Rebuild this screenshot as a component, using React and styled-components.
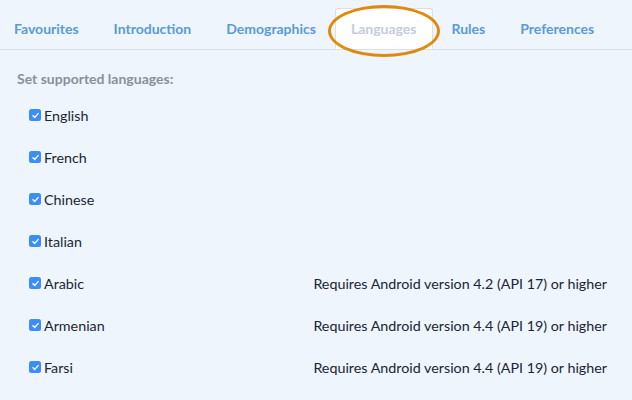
import { createGlobalStyle } from "styled-components";
import styled from "styled-components";

const GlobalStyle = createGlobalStyle`
  html, body {
    margin: 0;
    padding: 0;
    background: #eef5fd;
    font-family: Lato, "Open Sans", sans-serif;
  }
`;

const Page = styled.div`
  width: 632px;
  height: 400px;
  overflow: hidden;
  background: #eef5fd;
`;

const TabBar = styled.ul`
  display: flex;
  margin: 0;
  padding: 8px 0 0 0;
  list-style: none;
  border-bottom: 1px solid #dcdfe3;
  height: 41px;
  margin-left: -2px;
`;

const Tab = styled.li`
  position: relative;
  display: flex;
  align-items: center;
  height: 41px;
  padding: 0 15px;
  margin-right: 3px;
  margin-bottom: -1px;
  box-sizing: border-box;
  font-size: 14px;
  font-weight: 700;
  color: ${(props) => (props.active ? "#c5cdd8" : "#5a9ad8")};
  background: ${(props) => (props.active ? "#ffffff" : "transparent")};
  border: 1px solid ${(props) => (props.active ? "#dcdfe3" : "transparent")};
  border-bottom-color: ${(props) => (props.active ? "#ffffff" : "transparent")};
  border-radius: 3px 3px 0 0;
  cursor: pointer;
`;

const Highlight = styled.span`
  position: absolute;
  left: -8px;
  top: -4px;
  width: 106px;
  height: 46px;
  border: 3px solid #e08a0c;
  border-radius: 50%;
  pointer-events: none;
`;

const Content = styled.div`
  padding: 20px 25px 0 17px;
`;

const Heading = styled.div`
  font-size: 14px;
  font-weight: 700;
  color: #8a909b;
  margin-bottom: 7px;
`;

const Row = styled.div`
  display: flex;
  align-items: center;
  justify-content: space-between;
  height: 42px;
  padding-left: 12px;
  font-size: 14.3px;
  color: #1b2535;
`;

const Label = styled.label`
  display: flex;
  align-items: center;
  gap: 3px;
`;

const Box = styled.span`
  display: inline-flex;
  align-items: center;
  justify-content: center;
  width: 12px;
  height: 12px;
  border-radius: 2.5px;
  background: #3a8ef6;
`;

const Note = styled.span`
  color: #1b2535;
`;

const Check = () => (
  <Box>
    <svg width="9" height="9" viewBox="0 0 10 10">
      <path
        d="M2.2 5.2 L4.2 7.1 L7.9 2.9"
        fill="none"
        stroke="#fff"
        strokeWidth="1.6"
        strokeLinecap="round"
        strokeLinejoin="round"
      />
    </svg>
  </Box>
);

const tabs = ["Favourites", "Introduction", "Demographics", "Languages", "Rules", "Preferences"];

const languages = [
  { name: "English" },
  { name: "French" },
  { name: "Chinese" },
  { name: "Italian" },
  { name: "Arabic", note: "Requires Android version 4.2 (API 17) or higher" },
  { name: "Armenian", note: "Requires Android version 4.4 (API 19) or higher" },
  { name: "Farsi", note: "Requires Android version 4.4 (API 19) or higher" },
];

export default function App() {
  return (
    <Page>
      <GlobalStyle />
      <TabBar>
        {tabs.map((t) => (
          <Tab key={t} active={t === "Languages"}>
            {t}
            {t === "Languages" && <Highlight />}
          </Tab>
        ))}
      </TabBar>
      <Content>
        <Heading>Set supported languages:</Heading>
        {languages.map(({ name, note }) => (
          <Row key={name}>
            <Label>
              <Check />
              {name}
            </Label>
            {note && <Note>{note}</Note>}
          </Row>
        ))}
      </Content>
    </Page>
  );
}
